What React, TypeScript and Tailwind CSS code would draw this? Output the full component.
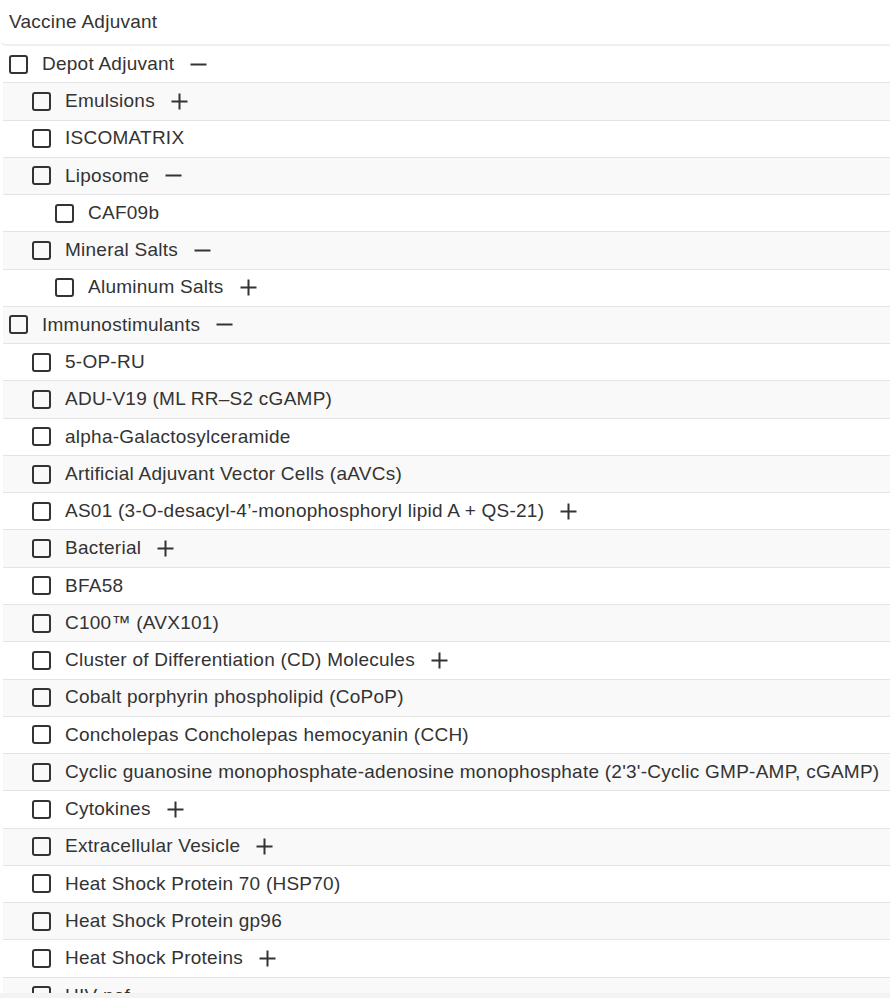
import React from "react";

type Node = { label: string; level: number; toggle?: "plus" | "minus" };

const nodes: Node[] = [
  { label: "Depot Adjuvant", level: 0, toggle: "minus" },
  { label: "Emulsions", level: 1, toggle: "plus" },
  { label: "ISCOMATRIX", level: 1 },
  { label: "Liposome", level: 1, toggle: "minus" },
  { label: "CAF09b", level: 2 },
  { label: "Mineral Salts", level: 1, toggle: "minus" },
  { label: "Aluminum Salts", level: 2, toggle: "plus" },
  { label: "Immunostimulants", level: 0, toggle: "minus" },
  { label: "5-OP-RU", level: 1 },
  { label: "ADU-V19 (ML RR–S2 cGAMP)", level: 1 },
  { label: "alpha-Galactosylceramide", level: 1 },
  { label: "Artificial Adjuvant Vector Cells (aAVCs)", level: 1 },
  { label: "AS01 (3-O-desacyl-4’-monophosphoryl lipid A + QS-21)", level: 1, toggle: "plus" },
  { label: "Bacterial", level: 1, toggle: "plus" },
  { label: "BFA58", level: 1 },
  { label: "C100™ (AVX101)", level: 1 },
  { label: "Cluster of Differentiation (CD) Molecules", level: 1, toggle: "plus" },
  { label: "Cobalt porphyrin phospholipid (CoPoP)", level: 1 },
  { label: "Concholepas Concholepas hemocyanin (CCH)", level: 1 },
  { label: "Cyclic guanosine monophosphate-adenosine monophosphate (2'3'-Cyclic GMP-AMP, cGAMP)", level: 1 },
  { label: "Cytokines", level: 1, toggle: "plus" },
  { label: "Extracellular Vesicle", level: 1, toggle: "plus" },
  { label: "Heat Shock Protein 70 (HSP70)", level: 1 },
  { label: "Heat Shock Protein gp96", level: 1 },
  { label: "Heat Shock Proteins", level: 1, toggle: "plus" },
  { label: "HIV nef", level: 1 },
];

function Toggle({ kind }: { kind: "plus" | "minus" }) {
  return (
    <svg width="17" height="17" viewBox="0 0 17 17" className="ml-[16px] shrink-0">
      <path d="M0.5 8.5H16.5" stroke="#333" strokeWidth="2" />
      {kind === "plus" && <path d="M8.5 0.5V16.5" stroke="#333" strokeWidth="2" />}
    </svg>
  );
}

function Row({ node, index }: { node: Node; index: number }) {
  const pads = ["pl-[6px]", "pl-[29px]", "pl-[52px]"];
  return (
    <div
      className={
        "flex h-[37.28px] shrink-0 items-center border-b border-[#e4e4e4] " +
        pads[node.level] +
        (index % 2 === 1 ? " bg-[#f9f9f9]" : " bg-white")
      }
    >
      <span className="h-[19px] w-[19px] shrink-0 rounded-[3px] border-2 border-[#333]" />
      <span className="ml-[14px] whitespace-nowrap">{node.label}</span>
      {node.toggle && <Toggle kind={node.toggle} />}
    </div>
  );
}

export default function App() {
  return (
    <div
      className="flex h-[998px] w-[890px] flex-col overflow-hidden bg-white text-[19px] tracking-[0.25px] text-[#333]"
      style={{ fontFamily: '"Liberation Sans", Arial, sans-serif' }}
    >
      <div className="flex h-[46px] shrink-0 items-center rounded-bl-[6px] border-b-2 border-[#efefef] pl-[9px]">
        Vaccine Adjuvant
      </div>
      <div className="ml-[3px] flex flex-1 flex-col overflow-hidden">
        {nodes.map((n, i) => (
          <Row key={n.label} node={n} index={i} />
        ))}
      </div>
      <div className="h-[5px] shrink-0 bg-[#f3f3f3]" />
    </div>
  );
}
